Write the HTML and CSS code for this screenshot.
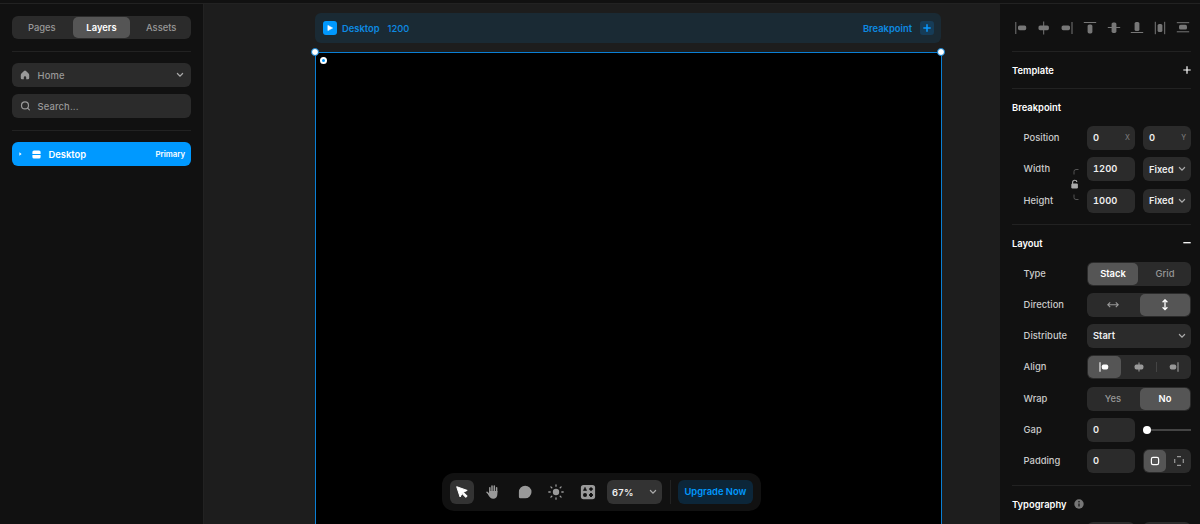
FILE: index.html
```
<!DOCTYPE html>
<html lang="en">
<head>
    <meta charset="UTF-8">
    <meta name="viewport" content="width=device-width, initial-scale=1.0">
    <title>Desktop</title>
    <link rel="stylesheet" href="styles.css">
</head>
<body>
    <!-- Left panel -->
    <aside class="left">
        <div class="segment tabs">
            <span>Pages</span>
            <span class="active">Layers</span>
            <span>Assets</span>
        </div>
        <div class="divider"></div>
        <div class="box">
            <svg class="icon" width="10" height="10" viewBox="0 0 10 10"><path d="M5 .6Q5.5.6 6 1L8.6 3.6Q9.2 4.2 9.2 5V8Q9.2 9.2 8 9.2H6.2V7.4Q6.2 6.3 5 6.3T3.8 7.4V9.2H2Q.8 9.2.8 8V5Q.8 4.2 1.4 3.6L4 1Q4.5.6 5 .6Z" fill="#999"/></svg>
            <span>Home</span>
            <svg class="chevron" width="8" height="6" viewBox="0 0 8 6"><path d="M1.4 1.5 4 4.1 6.6 1.5"/></svg>
        </div>
        <div class="box">
            <svg class="icon" width="10" height="10" viewBox="0 0 10 10"><g fill="none" stroke="#999" stroke-width="1.2" stroke-linecap="round"><circle cx="5" cy="4.4" r="3.5"/><path d="M7.6 7.1 9.4 8.9"/></g></svg>
            <span>Search...</span>
        </div>
        <div class="divider last"></div>
        <div class="layer">
            <svg class="arrow" width="3" height="4" viewBox="0 0 3 4"><path d="M.4.3 2.6 2 .4 3.7Z" fill="#fff"/></svg>
            <svg class="layer-icon" width="9" height="9" viewBox="0 0 9 9"><path d="M2 .4H7Q8.6.4 8.6 2V4H.4V2Q.4.4 2 .4ZM.4 5H8.6V7Q8.6 8.6 7 8.6H2Q.4 8.6.4 7Z" fill="#fff"/></svg>
            <span class="layer-name">Desktop</span>
            <span class="layer-tag">Primary</span>
        </div>
    </aside>

    <!-- Canvas -->
    <main class="canvas">
        <div class="frame-bar">
            <span class="play"><svg width="14" height="14" viewBox="0 0 14 14"><path d="M4.9 4.4V9.6L9.6 7Z" fill="#fff" stroke="#fff" stroke-width=".6" stroke-linejoin="round"/></svg></span>
            <span>Desktop</span>
            <span class="frame-size">1200</span>
            <span class="frame-add">Breakpoint</span>
            <span class="plus"><svg width="14" height="14" viewBox="0 0 14 14"><path d="M7 3.3V10.7M3.3 7H10.7" stroke="#0a99ff" stroke-width="1.5"/></svg></span>
        </div>
        <div class="frame">
            <i class="handle tl"></i>
            <i class="handle tr"></i>
            <i class="radius"></i>
        </div>

        <div class="toolbar">
            <span class="tool on"><svg width="24" height="24" viewBox="0 0 24 24"><path d="M6.7 6.7 17.2 10.4 13.4 12.2 17.2 16 15.8 17.4 12 13.6 10.1 17Z" fill="#fff" stroke="#fff" stroke-width="1" stroke-linejoin="round"/></svg></span>
            <span class="tool"><svg width="24" height="24" viewBox="0 0 24 24"><path d="M8.8 12.2V7.7M11 11.5V6M13.3 11.5V6M15.6 12V7.7M6 12.2 8.8 15" stroke="#999" stroke-width="1.5" stroke-linecap="round"/><path d="M8.1 11H16.4V13.8C16.4 17.2 14.8 18.8 12.2 18.8C10 18.8 8.8 17.4 7 14.5L8.1 13.5Z" fill="#999"/></svg></span>
            <span class="tool"><svg width="24" height="24" viewBox="0 0 24 24"><path d="M12.2 5.7A6.3 6.3 0 1 1 12.2 18.3H7.4Q5.9 18.3 5.9 16.8V12A6.3 6.3 0 0 1 12.2 5.7Z" fill="#999"/></svg></span>
            <span class="tool"><svg width="24" height="24" viewBox="0 0 24 24"><circle cx="12" cy="12" r="3.2" fill="#999"/><path d="M12 4.8V6.2M12 17.8V19.2M4.8 12H6.2M17.8 12H19.2M6.9 6.9 7.8 7.8M16.2 16.2 17.1 17.1M17.1 6.9 16.2 7.8M7.8 16.2 6.9 17.1" stroke="#999" stroke-width="1.3" stroke-linecap="round"/></svg></span>
            <span class="tool"><svg width="24" height="24" viewBox="0 0 24 24"><rect x="4.9" y="5" width="14.2" height="14.2" rx="2.6" fill="#999"/><g fill="#111"><path d="M9 7.3 10.6 10.5H7.4Z" stroke="#111" stroke-width=".6" stroke-linejoin="round"/><path d="M15 6.9 17.2 9.1 15 11.3 12.8 9.1Z"/><circle cx="9" cy="15" r="2"/><path d="M14 13.1H16V14H16.9V16H16V16.9H14V16H13.1V14H14Z"/></g></svg></span>
            <span class="zoom">67%<svg class="chevron" width="8" height="6" viewBox="0 0 8 6"><path d="M1.4 1.5 4 4.1 6.6 1.5"/></svg></span>
            <span class="bar-line"></span>
            <span class="upgrade">Upgrade Now</span>
        </div>
    </main>

    <!-- Right panel -->
    <aside class="right">
        <div class="aligns">
            <svg width="14" height="14" viewBox="-1 0 14 14"><path d="M.8 1V13"/><rect x="3" y="4.4" width="8.2" height="4.8" rx="1.6"/></svg>
            <svg width="14" height="14" viewBox="-1 0 14 14"><path d="M5.7 .5V13.5"/><rect x=".5" y="4.4" width="10.4" height="4.8" rx="1.6"/></svg>
            <svg width="14" height="14" viewBox="-1 0 14 14"><path d="M11 1V13"/><rect x=".6" y="4.4" width="8.4" height="4.8" rx="1.6"/></svg>
            <svg width="14" height="14" viewBox="0 0 14 14"><path d="M.8 1.5H13.2"/><rect x="4.6" y="3.4" width="4.8" height="9" rx="1.6"/></svg>
            <svg width="14" height="14" viewBox="0 0 14 14"><path d="M.8 6.5H13.2"/><rect x="4.6" y="1.5" width="4.8" height="10.4" rx="1.6"/></svg>
            <svg width="14" height="14" viewBox="0 0 14 14"><path d="M.8 11.5H13.2"/><rect x="4.6" y="1" width="4.8" height="9" rx="1.6"/></svg>
            <svg width="14" height="14" viewBox="-1 0 14 14"><path d="M1.3 .8V13.2M10.7 .8V13.2"/><rect x="3.6" y="3" width="4.8" height="8" rx="1.6"/></svg>
            <svg width="14" height="14" viewBox="0 0 14 14"><path d="M.8 1.7H13.2M.8 10.8H13.2"/><rect x="3" y="3.8" width="8" height="4.8" rx="1.6"/></svg>
        </div>

        <div class="section-head template">Template
            <svg width="8" height="8" viewBox="0 0 8 8"><path d="M4 .3V7.7M.3 4H7.7" stroke="#fff" stroke-width="1.2"/></svg>
        </div>

        <div class="section-head">Breakpoint</div>
        <div class="rows breakpoint">
            <label>Position</label><div class="field">0<small>X</small></div><div class="field">0<small>Y</small></div>
            <label>Width</label><div class="field">1200</div><div class="field pick">Fixed<svg class="chevron" width="8" height="6" viewBox="0 0 8 6"><path d="M1.4 1.5 4 4.1 6.6 1.5"/></svg></div>
            <label>Height</label><div class="field">1000</div><div class="field pick">Fixed<svg class="chevron" width="8" height="6" viewBox="0 0 8 6"><path d="M1.4 1.5 4 4.1 6.6 1.5"/></svg></div>
            <svg class="lock" width="10" height="34" viewBox="0 0 10 34"><path d="M8.5 1.5H6Q4 1.5 4 3.5V6.5M4 26.5V29.5Q4 31.5 6 31.5H8.5" fill="none" stroke="#555"/><path d="M2.6 16.5V14.4Q2.6 12.3 4.7 12.3T6.8 14" fill="none" stroke="#aaa" stroke-width="1.1"/><rect x="1.3" y="15.5" width="6.6" height="5" rx="1.2" fill="#aaa"/></svg>
        </div>

        <div class="section-head layout">Layout
            <svg width="8" height="8" viewBox="0 0 8 8"><path d="M.3 3.7H7.7" stroke="#fff" stroke-width="1.3"/></svg>
        </div>
        <div class="rows">
            <label>Type</label>
            <div class="segment wide"><span class="active">Stack</span><span>Grid</span></div>
            <label>Direction</label>
            <div class="segment wide">
                <span><svg width="12" height="8" viewBox="0 0 12 8"><path d="M.8 3.7H11.2M3.2 1.3.8 3.7 3.2 6.1M8.8 1.3 11.2 3.7 8.8 6.1" fill="none" stroke="#999" stroke-width="1.1"/></svg></span>
                <span class="active"><svg width="8" height="12" viewBox="0 0 8 12"><path d="M4 1.2V10.2M1.6 3.2 4 .8 6.4 3.2M1.6 8.2 4 10.6 6.4 8.2" fill="none" stroke="#fff" stroke-width="1.3"/></svg></span>
            </div>
            <label>Distribute</label>
            <div class="field wide">Start<svg class="chevron" width="8" height="6" viewBox="0 0 8 6"><path d="M1.4 1.5 4 4.1 6.6 1.5"/></svg></div>
            <label>Align</label>
            <div class="segment wide">
                <span class="active"><svg width="10" height="10" viewBox="0 0 10 10"><path d="M1 .2V9.8" stroke="#fff" stroke-width="1.1"/><rect x="2.8" y="2.6" width="6.4" height="4.8" rx="1.7" fill="#fff"/></svg></span>
                <span><svg width="10" height="10" viewBox="0 0 10 10"><path d="M5 .6V9.4" stroke="#999" stroke-width="1.1"/><rect x=".6" y="2.6" width="8.8" height="4.8" rx="1.7" fill="#999"/></svg></span>
                <span class="split"><svg width="10" height="10" viewBox="0 0 10 10"><path d="M9 .2V9.8" stroke="#999" stroke-width="1.1"/><rect x=".8" y="2.6" width="6.4" height="4.8" rx="1.7" fill="#999"/></svg></span>
            </div>
            <label>Wrap</label>
            <div class="segment wide"><span>Yes</span><span class="active">No</span></div>
            <label>Gap</label>
            <div class="field">0</div>
            <div class="slider"><i></i></div>
            <label>Padding</label>
            <div class="field">0</div>
            <div class="segment">
                <span class="active"><svg width="10" height="10" viewBox="0 0 10 10"><rect x="1.4" y="1.4" width="7.2" height="7.2" rx="1.6" fill="none" stroke="#fff" stroke-width="1.2"/></svg></span>
                <span><svg width="10" height="10" viewBox="0 0 10 10"><path d="M3 .7H7M3 9.3H7M.7 3V7M9.3 3V7" stroke="#999" stroke-width="1.2"/></svg></span>
            </div>
        </div>

        <div class="section-head typography">Typography
            <svg class="info" width="10" height="10" viewBox="0 0 10 10"><circle cx="5" cy="5" r="4.7" fill="#777"/><path d="M5 4.4V7.5" stroke="#111" stroke-width="1.2"/><circle cx="5" cy="2.8" r=".8" fill="#111"/></svg>
        </div>
        <div class="rows"><label></label><div class="field"></div><div class="field"></div></div>
    </aside>
</body>
</html>
```
FILE: styles.css
```
* {
    margin: 0;
    padding: 0;
    box-sizing: border-box;
}

body {
    display: flex;
    height: 524px;
    overflow: hidden;
    border-top: 3px solid #111;
    background: #111;
    font-family: Inter, sans-serif;
    font-size: 9.4px;
    font-weight: 500;
    color: #999;
}

svg {
    display: block;
    flex: none;
}

.left {
    width: 204px;
    padding: 12px 12px 0;
    border-top: 1px solid #222;
    border-right: 1px solid #222;
}

.divider {
    height: 1px;
    margin: 11px 0;
    background: #222;
}

.divider.last {
    margin: 12px 0 11px;
}

/* Segmented controls */
.segment {
    display: flex;
    gap: 2px;
    height: 24px;
    padding: 1px;
    border-radius: 6px;
    background: #2b2b2b;
}

.segment span {
    flex: 1;
    display: flex;
    align-items: center;
    justify-content: center;
    border-radius: 5px;
}

.segment .active {
    background: #555;
    color: #fff;
    font-weight: 600;
}

.segment .split {
    position: relative;
}

.segment .split::before {
    content: "";
    position: absolute;
    left: -1px;
    top: 6px;
    width: 1px;
    height: 10px;
    background: #444;
}

.tabs {
    height: 23px;
    margin-bottom: 12px;
}

.box {
    display: flex;
    align-items: center;
    height: 24px;
    padding: 0 7px 0 8px;
    margin-bottom: 7px;
    border-radius: 6px;
    background: #2b2b2b;
    letter-spacing: 0.15px;
}

.box .icon {
    margin-right: 7.5px;
}

.chevron {
    margin-left: auto;
    fill: none;
    stroke: #aaa;
    stroke-width: 1.2;
    stroke-linecap: round;
}

.layer {
    display: flex;
    align-items: center;
    height: 24px;
    padding: 0 6px 0 7px;
    border-radius: 6px;
    background: #09f;
    color: #fff;
}

.layer-icon {
    margin: 0 7.5px 0 10px;
}

.layer-name {
    font-weight: 600;
}

.layer-tag {
    margin-left: auto;
    font-size: 7.8px;
    font-weight: 600;
}

/* Canvas */
.canvas {
    position: relative;
    width: 796px;
    padding: 9px 58px 0 111px;
    border-top: 1px solid #222;
    background: #1d1d1d;
}

.frame-bar {
    display: flex;
    align-items: center;
    height: 30px;
    margin-right: 1px;
    padding: 0 7px 0 8px;
    border-radius: 6px;
    background: #1a2a34;
    color: #0d8ae2;
    font-weight: 600;
}

.play {
    margin-right: 5px;
    border-radius: 3px;
    background: #09f;
}

.frame-size {
    margin-left: 8px;
    font-weight: 500;
}

.frame-add {
    margin-left: auto;
}

.plus {
    margin-left: 8px;
    border-radius: 3px;
    background: #163c57;
}

.frame {
    position: relative;
    height: 480px;
    margin-top: 9px;
    border: 1px solid #0a7fd4;
    background: #000;
}

.handle {
    position: absolute;
    top: -5px;
    width: 8px;
    height: 8px;
    border: 1px solid #0c7fd0;
    border-radius: 50%;
    background: #fff;
}

.tl {
    left: -5px;
}

.tr {
    right: -4px;
}

.radius {
    position: absolute;
    left: 4px;
    top: 4px;
    width: 7px;
    height: 7px;
    border: 2px solid #fff;
    border-radius: 50%;
    background: #09f;
}

.toolbar {
    position: absolute;
    left: 238px;
    top: 469px;
    display: flex;
    align-items: center;
    width: 319px;
    height: 38px;
    padding: 0 8px;
    border-radius: 12px;
    background: #111;
}

.tool {
    margin-right: 7.4px;
    border-radius: 6px;
}

.tool.on {
    background: #333;
}

.zoom {
    display: flex;
    align-items: center;
    width: 55px;
    height: 24px;
    padding: 0 5px;
    border-radius: 6px;
    background: #333;
    color: #eee;
    font-weight: 600;
    letter-spacing: 0.3px;
}

.bar-line {
    width: 1px;
    height: 24px;
    margin: 0 7px 0 8px;
    background: #222;
}

.upgrade {
    width: 75px;
    height: 24px;
    border-radius: 6px;
    background: #0c2639;
    color: #09f;
    font-weight: 600;
    line-height: 24px;
    text-align: center;
}

/* Right panel */
.right {
    width: 200px;
    padding: 0 9px 0 12px;
    border-top: 1px solid #222;
}

.aligns {
    display: flex;
    align-items: center;
    justify-content: space-between;
    height: 47px;
    padding: 0 1px 0 2px;
}

.aligns svg {
    fill: #777;
}

.aligns path {
    stroke: #777;
}

.section-head {
    display: flex;
    align-items: center;
    justify-content: space-between;
    height: 38px;
    border-top: 1px solid #222;
    color: #fff;
    font-weight: 600;
}

.section-head.template {
    height: 37px;
}

.section-head.layout {
    margin-top: 11px;
}

.section-head.typography {
    justify-content: flex-start;
    height: 37px;
    margin-top: 12px;
}

.info {
    margin-left: 7px;
}

.rows {
    position: relative;
    display: grid;
    grid-template-columns: 55px 48px 48px;
    column-gap: 8px;
    row-gap: 7.3px;
    grid-auto-rows: 24px;
    margin-left: 12px;
}

.rows label {
    margin-left: -0.4px;
    line-height: 23px;
    color: #ccc;
}

.field {
    display: flex;
    align-items: center;
    padding: 0 5px 1px 6px;
    border-radius: 6px;
    background: #2b2b2b;
    color: #eee;
    font-weight: 600;
    font-variant-numeric: tabular-nums;
}

.pick {
    padding-bottom: 0;
}

.field small {
    margin-left: auto;
    font-size: 7px;
    font-weight: 500;
    color: #777;
}

.wide {
    grid-column: span 2;
}

.lock {
    position: absolute;
    left: 46px;
    top: 42px;
}

.slider {
    display: flex;
    align-items: center;
    height: 24px;
    background: linear-gradient(#444, #444) center / 100% 2px no-repeat;
}

.slider i {
    width: 8px;
    height: 8px;
    border-radius: 50%;
    background: #fff;
}
```
